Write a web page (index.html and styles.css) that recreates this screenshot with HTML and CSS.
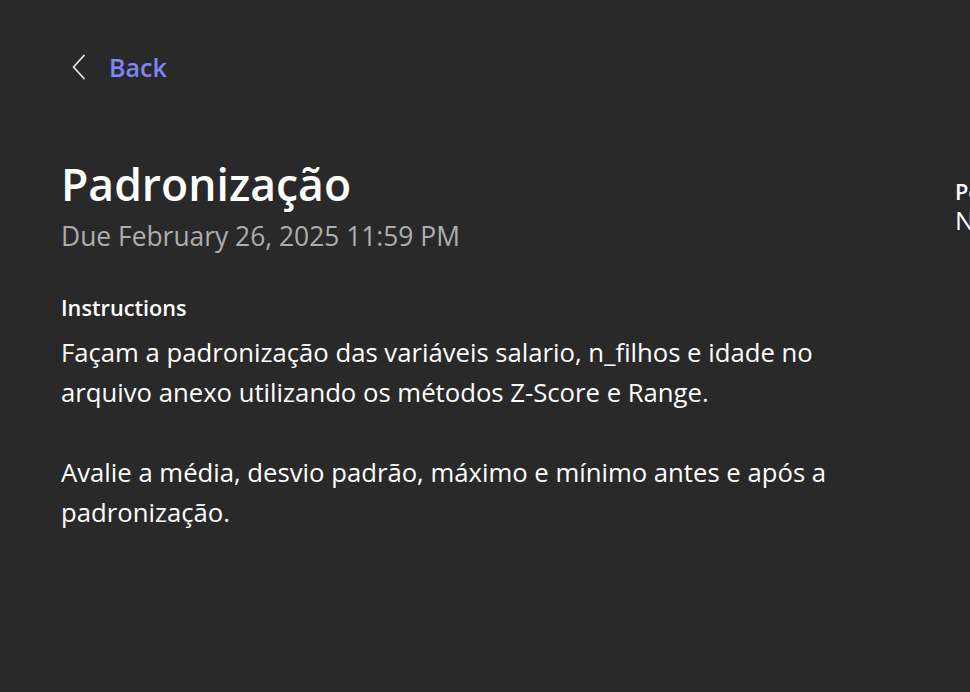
FILE: index.html
```html
<!DOCTYPE html>
<html lang="pt">
<head>
<meta charset="utf-8">
<link rel="stylesheet" href="styles.css">
</head>
<body>
<div class="page">
  <div class="topbar">
    <a class="back" href="#">
      <svg class="chev" width="16" height="26" viewBox="0 0 16 26"><path d="M13 1.5 L2.5 13 L13 24.5" fill="none" stroke="#e6e6e6" stroke-width="1.8" stroke-linecap="round" stroke-linejoin="round"/></svg>
      <span class="back-label">Back</span>
    </a>
  </div>
  <div class="content">
    <div class="main">
      <h1 class="title">Padronização</h1>
      <div class="due">Due February 26, 2025 11:59 PM</div>
      <h2 class="section">Instructions</h2>
      <p class="text first">Façam a padronização das variáveis salario, n_filhos e idade no arquivo anexo utilizando os métodos Z-Score e Range.</p>
      <p class="text">Avalie a média, desvio padrão, máximo e mínimo antes e após a padronização.</p>
    </div>
    <div class="side">
      <div class="side-label">Points</div>
      <div class="side-value">No points</div>
    </div>
  </div>
</div>
</body>
</html>
```
FILE: styles.css
```css
html, body {
  margin: 0;
  padding: 0;
  background: #292929;
  overflow: hidden;
}
body {
  font-family: "Open Sans", "Noto Sans", sans-serif;
  color: #ffffff;
  width: 970px;
  height: 692px;
}
.page {
  padding: 0 0 0 61px;
}
.topbar {
  height: 154px;
  padding-top: 53px;
  box-sizing: border-box;
}
.back {
  display: inline-flex;
  align-items: center;
  gap: 22px;
  text-decoration: none;
  margin-left: 10px;
}
.chev {
  margin-top: 1px;
}
.back-label {
  color: #7f85f5;
  font-size: 25px;
  font-weight: 600;
  line-height: 26px;
}
.content {
  display: flex;
}
.main {
  width: 820px;
  flex: none;
}
.title {
  margin: 0;
  font-size: 44.5px;
  font-weight: 600;
  line-height: 60px;
}
.due {
  margin-top: 6px;
  color: #adadad;
  font-size: 26.4px;
  line-height: 32px;
}
.section {
  margin: 42px 0 0;
  font-size: 21.7px;
  font-weight: 600;
  line-height: 28px;
}
.text {
  margin: 40px 0 0;
  font-size: 25.7px;
  line-height: 40px;
  width: 800px;
}
.text.first {
  margin-top: 11px;
}
.side {
  margin-left: 74px;
  padding-top: 25px;
  white-space: nowrap;
}
.side-label {
  font-size: 21.7px;
  font-weight: 600;
  line-height: 26px;
}
.side-value {
  font-size: 25.7px;
  line-height: 32px;
}
```
